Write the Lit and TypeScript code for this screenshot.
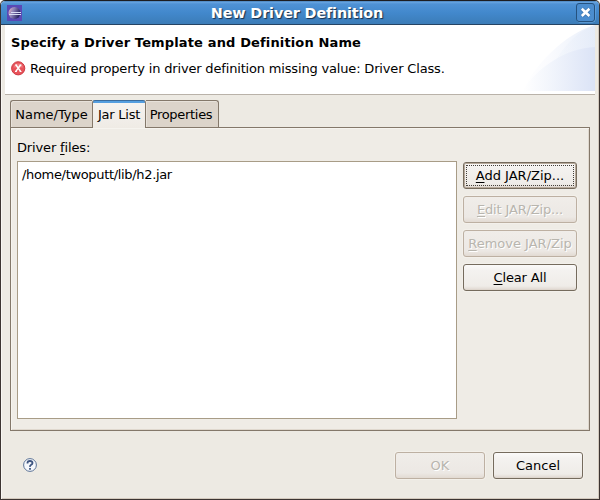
import { LitElement, html, css } from "lit";
import { customElement, property } from "lit/decorators.js";

@customElement("gtk-button")
class GtkButton extends LitElement {
  @property() label = "";
  @property({ type: Boolean }) mnemonic = false;
  @property({ type: Boolean, reflect: true }) disabled = false;
  @property({ type: Boolean, reflect: true }) focused = false;

  static styles = css`
    :host {
      display: block;
      height: 27px;
    }
    .button {
      box-sizing: border-box;
      display: block;
      width: 100%;
      height: 27px;
      margin: 0;
      padding: 0;
      border: 1px solid #756b5d;
      border-radius: 3px;
      background: linear-gradient(#fbfaf9 0, #f4f2f0 5px, #efece8 21px, #e3dcd5 24px, #d9d0c6 25px);
      box-shadow: 0 0 0 1px rgba(245, 242, 236, 0.7);
      font: 13px/25px "DejaVu Sans", sans-serif;
      letter-spacing: inherit;
      color: #000;
      text-align: center;
      white-space: nowrap;
    }
    :host([disabled]) .button {
      border-color: #bdb0a2;
      background: linear-gradient(#f0ede9, #ece8e4 20px, #e2dad2);
      color: #b8b5ae;
      text-shadow: 1px 1px 0 #fff;
    }
    :host([focused]) .button {
      box-shadow: inset 0 0 0 1px #b8aa9b;
      padding: 2px;
      line-height: 20px;
    }
    .label {
      display: block;
    }
    :host([focused]) .label {
      height: 19px;
      border: 1px dotted #443f38;
    }
    .key {
      text-decoration: underline;
      text-decoration-thickness: 1px;
      text-underline-offset: 2px;
      text-decoration-skip-ink: none;
    }
  `;

  render() {
    const text = this.mnemonic
      ? html`<span class="key">${this.label[0]}</span>${this.label.slice(1)}`
      : this.label;
    return html`<button class="button" ?disabled=${this.disabled}><span class="label">${text}</span></button>`;
  }
}

@customElement("app-root")
class AppRoot extends LitElement {
  static styles = css`
    :host {
      display: block;
      width: 600px;
      height: 500px;
      background: #fff;
      font: 13px/18px "DejaVu Sans", sans-serif;
      color: #000;
    }
    .window {
      box-sizing: border-box;
      width: 600px;
      height: 500px;
      display: flex;
      flex-direction: column;
      overflow: hidden;
      border: 1px solid #3c3431;
      border-top-color: #1d1d20;
      border-radius: 5px 5px 0 0;
      background: #edeae3;
      box-shadow: inset 1px 0 #f8f6f2, inset -1px -1px #d3c9bd;
    }
    .titlebar {
      box-sizing: border-box;
      flex: none;
      height: 24px;
      display: grid;
      grid-template-columns: 26px 1fr 32px;
      align-items: center;
      border-bottom: 1px solid #254363;
      border-radius: 4px 4px 0 0;
      background: linear-gradient(#3d76ae 0, #6aa6e2 1px, #4f92d5 3px, #4288cc 12px, #3c7db9 22px);
    }
    .app-icon {
      display: block;
      margin: 0 0 0 6px;
    }
    .title {
      font: bold 14.4px/22px "DejaVu Sans", sans-serif;
      letter-spacing: -0.14px;
      color: #fff;
      text-align: center;
      text-shadow: 1px 1px 1px #1a2f48;
      white-space: nowrap;
    }
    .close {
      display: block;
      margin-left: 9px;
    }
    .banner {
      box-sizing: border-box;
      flex: none;
      position: relative;
      height: 70px;
      margin: 0 4px;
      padding: 9px 6px 0;
      border-bottom: 1px solid #b9b2a9;
      background: #fff;
    }
    .heading {
      margin: 0;
      font: bold 13px/18px "DejaVu Sans", sans-serif;
      letter-spacing: 0.14px;
      white-space: nowrap;
    }
    .message {
      display: flex;
      align-items: center;
      gap: 4px;
      height: 18px;
      margin-top: 8px;
      letter-spacing: -0.17px;
      white-space: nowrap;
    }
    .error {
      display: block;
      margin-bottom: 2px;
    }
    .art {
      position: absolute;
      right: 0;
      top: 0;
    }
    .notebook {
      flex: none;
      margin: 5px 9px 0;
    }
    .tabs {
      display: flex;
      height: 27px;
      align-items: flex-end;
    }
    .tab {
      box-sizing: border-box;
      height: 27px;
      border: 1px solid #84786a;
      border-bottom: 0;
      background: #dcd4ca;
      box-shadow: inset 1px 1px #e8e2da;
      line-height: 27px;
      text-align: center;
      white-space: nowrap;
    }
    .name {
      width: 82px;
      border-right: 0;
      border-radius: 3px 0 0 0;
    }
    .jar {
      width: 54px;
      height: 28px;
      margin-bottom: -1px;
      border-top-color: #3a6c9d;
      border-radius: 3px 3px 0 0;
      background: linear-gradient(#559fe0 2px, #f5f3f0 2px, #efebe5);
      box-shadow: none;
      letter-spacing: -0.22px;
    }
    .props {
      width: 73px;
      padding-right: 2px;
      border-left: 0;
      border-radius: 0 3px 0 0;
      letter-spacing: -0.3px;
    }
    .panel {
      box-sizing: border-box;
      height: 304px;
      padding: 11px 12px 0 6px;
      border: 1px solid #84786a;
      background: #efece6;
      box-shadow: inset 1px 1px #f6f4ef, inset -1px -1px #dfd8ce;
    }
    .caption {
      height: 18px;
      letter-spacing: -0.15px;
    }
    .key {
      text-decoration: underline;
      text-decoration-thickness: 1px;
      text-underline-offset: 2px;
    }
    .content {
      display: flex;
      gap: 6px;
      margin-top: 4px;
    }
    .files {
      box-sizing: border-box;
      width: 440px;
      height: 258px;
      padding: 4px;
      border: 1px solid #a89c87;
      background: #fff;
      letter-spacing: -0.33px;
    }
    .actions {
      display: flex;
      flex-direction: column;
      gap: 7px;
      width: 114px;
      padding-top: 1px;
    }
    .tight {
      letter-spacing: -0.15px;
    }
    .footer {
      flex: none;
      display: flex;
      align-items: center;
      gap: 8px;
      height: 27px;
      margin: 21px 16px 0 22px;
    }
    .help {
      display: block;
      margin: 0 auto 1px 0;
    }
    .confirm {
      width: 90px;
    }
  `;

  render() {
    return html`
      <div class="window">
        <header class="titlebar">
          <svg class="app-icon" width="15" height="16" viewBox="0 0 15 16">
            <defs>
              <linearGradient id="ball" x1="0" x2="1" y2="0.4">
                <stop offset="0" stop-color="#eeb8c5" />
                <stop offset=".45" stop-color="#8c83b8" />
                <stop offset="1" stop-color="#292463" />
              </linearGradient>
            </defs>
            <rect width="15" height="16" fill="#5a49b5" />
            <circle cx="7.5" cy="8" r="6" fill="url(#ball)" />
            <path d="M4 7.5h10M2 9.5h12" stroke="#d8dcf4" />
          </svg>
          <div class="title">New Driver Definition</div>
          <svg class="close" width="20" height="20" viewBox="0 0 20 20">
            <rect x="1" y="1" width="18" height="18" rx="2.5" fill="none" stroke="#77b0e6" />
            <rect x=".5" y=".5" width="18" height="18" rx="2.5" fill="#4b8dcf" stroke="#25527f" />
            <path d="M6 6l7.4 7M13.4 6L6 13" stroke="#254d78" stroke-width="4" opacity=".35" />
            <path d="M5.8 5.8l7.6 7.2M13.4 5.8L5.8 13" stroke="#fff" stroke-width="2.6" />
          </svg>
        </header>

        <section class="banner">
          <svg class="art" width="75" height="66" viewBox="0 0 75 66">
            <defs>
              <linearGradient id="pale" gradientUnits="userSpaceOnUse" x1="5" x2="75" y1="0" y2="0">
                <stop offset="0" stop-color="#fff" />
                <stop offset=".35" stop-color="#fafbfe" />
                <stop offset="1" stop-color="#e9effa" />
              </linearGradient>
              <linearGradient id="inner" gradientUnits="userSpaceOnUse" x1="30" x2="75" y1="0" y2="0">
                <stop offset="0" stop-color="#f4f7fc" />
                <stop offset="1" stop-color="#e0e8f7" />
              </linearGradient>
              <linearGradient id="deep" gradientUnits="userSpaceOnUse" x1="3" x2="75" y1="0" y2="0">
                <stop offset="0" stop-color="#fff" />
                <stop offset=".35" stop-color="#f3f6fc" />
                <stop offset="1" stop-color="#dbe3f6" />
              </linearGradient>
            </defs>
            <path d="M2 66C15 40 44 9 75 0V66Z" fill="url(#pale)" />
            <path d="M32 43C41 24 55 7 75 0V66H32Z" fill="url(#inner)" opacity=".5" />
            <path d="M2 66C18 42 46 23 75 22V66Z" fill="url(#deep)" />
          </svg>
          <h1 class="heading">Specify a Driver Template and Definition Name</h1>
          <div class="message">
            <svg class="error" width="15" height="15" viewBox="0 0 15 15">
              <circle cx="7.2" cy="7.3" r="6.6" fill="#e8535a" stroke="#cc3a43" />
              <path d="M2.5 6.5a4.8 4.8 0 0 1 9.5 0" fill="#f38a8d" opacity=".7" />
              <path d="M5 4l4.6 6.4M9.6 4L4.8 10.4" stroke="#fff" stroke-width="1.5" fill="none" />
              <path d="M4 4h2M8.7 4h1.8M4 10.5h1.8M8.7 10.5h1.8" stroke="#fff" />
            </svg>
            <span>Required property in driver definition missing value: Driver Class.</span>
          </div>
        </section>

        <main class="notebook">
          <div class="tabs">
            <div class="tab name">Name/Type</div>
            <div class="tab jar">Jar List</div>
            <div class="tab props">Properties</div>
          </div>
          <div class="panel">
            <div class="caption">Driver <span class="key">f</span>iles:</div>
            <div class="content">
              <div class="files">/home/twoputt/lib/h2.jar</div>
              <div class="actions">
                <gtk-button label="Add JAR/Zip..." mnemonic focused></gtk-button>
                <gtk-button class="tight" label="Edit JAR/Zip..." mnemonic disabled></gtk-button>
                <gtk-button label="Remove JAR/Zip" mnemonic disabled></gtk-button>
                <gtk-button class="tight" label="Clear All" mnemonic></gtk-button>
              </div>
            </div>
          </div>
        </main>

        <footer class="footer">
          <svg class="help" width="14" height="14" viewBox="0 0 14 14">
            <circle cx="7" cy="7" r="6.4" fill="#f6f8fc" stroke="#5c7396" />
            <path d="M4.5 5.4V4.7Q4.7 3 7 3T9.5 4.9Q9.5 6 8.2 6.8T7 8.9M7 10v1.8" fill="none" stroke="#3e5580" stroke-width="1.8" />
          </svg>
          <gtk-button class="confirm" label="OK" disabled></gtk-button>
          <gtk-button class="confirm" label="Cancel"></gtk-button>
        </footer>
      </div>
    `;
  }
}
